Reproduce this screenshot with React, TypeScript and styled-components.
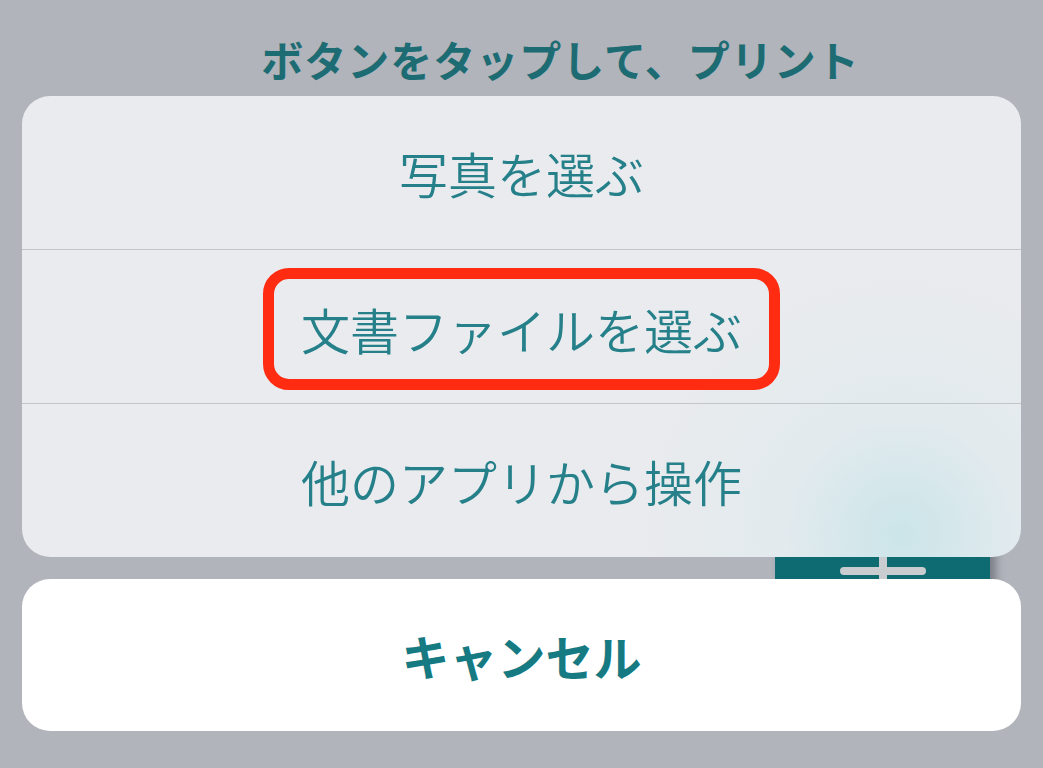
import styled, { createGlobalStyle } from "styled-components";

const GlobalStyle = createGlobalStyle`
  html, body {
    margin: 0;
    padding: 0;
    height: 100%;
    background: #b1b4bb;
    font-family: "Noto Sans CJK JP", "Noto Sans", sans-serif;
  }
  #root {
    height: 100%;
  }
`;

const Screen = styled.div`
  position: relative;
  width: 1043px;
  height: 768px;
  overflow: hidden;
  background: #b1b4bb;
`;

const Backdrop = styled.div`
  display: flex;
  flex-direction: column;
  align-items: center;
  padding: 31px 0 0 78px;
`;

const Heading = styled.h1`
  margin: 0;
  font-size: 42px;
  font-weight: 700;
  line-height: 56px;
  color: #1e6c73;
  letter-spacing: 1px;
`;

const FabRow = styled.div`
  align-self: stretch;
  display: flex;
  justify-content: flex-end;
  padding-right: 53px;
  margin-top: 368px;
`;

const Fab = styled.div`
  width: 215px;
  height: 120px;
  background: #0e6b72;
  display: flex;
  align-items: center;
  justify-content: center;
  box-shadow: 6px 0 8px rgba(60, 62, 70, 0.45);
`;

const Overlay = styled.div`
  position: absolute;
  inset: 0;
  display: flex;
  flex-direction: column;
  justify-content: flex-end;
  gap: 22px;
  padding: 0 22px 37px;
`;

const Group = styled.div`
  border-radius: 28px;
  overflow: hidden;
  background:
    radial-gradient(circle at 88% 95%, rgba(200, 228, 232, 0.9) 0, rgba(220, 234, 238, 0.5) 120px, rgba(233, 235, 238, 0) 260px),
    #e9ebee;
`;

const Row = styled.div<{ $last?: boolean }>`
  height: 153px;
  display: flex;
  align-items: center;
  justify-content: center;
  border-bottom: ${(p) => (p.$last ? "none" : "1px solid #c3c5c9")};
  color: #25808a;
  font-size: 49px;
  font-weight: 350;
`;

const Marked = styled.span`
  display: inline-block;
  border: 11px solid #ff2c12;
  border-radius: 26px;
  padding: 0 27px;
  height: 100px;
  line-height: 100px;
  margin-top: 4px;
`;

const Cancel = styled.div`
  height: 152px;
  border-radius: 28px;
  background: #ffffff;
  display: flex;
  align-items: center;
  justify-content: center;
  color: #167a82;
  font-size: 48px;
  font-weight: 700;
`;

const App = () => {
  return (
    <Screen>
      <GlobalStyle />
      <Backdrop>
        <Heading>ボタンをタップして、プリント</Heading>
        <Heading>するファイルを選択してください</Heading>
        <FabRow>
          <Fab>
            <svg width="90" height="90" viewBox="0 0 90 90">
              <rect x="2" y="41" width="86" height="8" rx="4" fill="#c9cdd0" />
              <rect x="41" y="2" width="8" height="86" rx="4" fill="#c9cdd0" />
            </svg>
          </Fab>
        </FabRow>
      </Backdrop>
      <Overlay>
        <Group>
          <Row>写真を選ぶ</Row>
          <Row>
            <Marked>文書ファイルを選ぶ</Marked>
          </Row>
          <Row $last>他のアプリから操作</Row>
        </Group>
        <Cancel>キャンセル</Cancel>
      </Overlay>
    </Screen>
  );
};

export default App;
